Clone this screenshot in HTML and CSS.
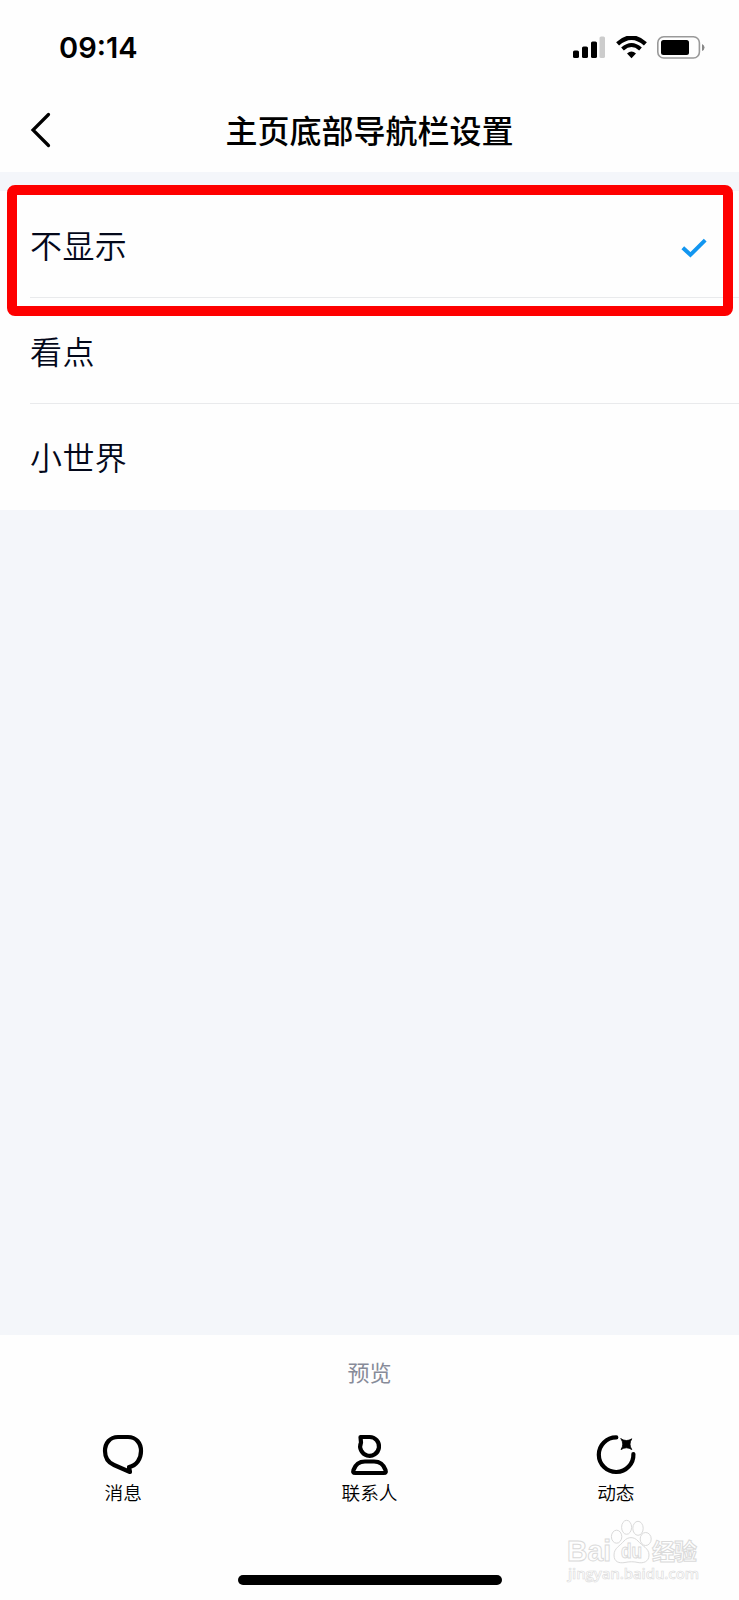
FILE: index.html
```
<!DOCTYPE html>
<html lang="zh-CN">
<head>
    <meta charset="UTF-8">
    <title>主页底部导航栏设置</title>
    <link rel="stylesheet" href="styles.css">
</head>
<body>
    <div id="screen">
        <div class="status-bar">
            <span class="time">09:14</span>
            <div class="status-icons">
                <svg class="signal" width="33" height="23" viewBox="0 0 33 23">
                    <rect x="0" y="14.5" width="6" height="7.5" rx="1.6"/>
                    <rect x="9" y="10.5" width="6" height="11.5" rx="1.6"/>
                    <rect x="18" y="5.5" width="6" height="16.5" rx="1.6"/>
                    <rect x="26.5" y="0.5" width="5.5" height="21.5" rx="1.6" fill="#ccc"/>
                </svg>
                <svg class="wifi" width="31" height="23" viewBox="0 0 31 23">
                    <path d="M1.6 7.8Q15.5 -4.6 29.4 7.8" fill="none" stroke="#000" stroke-width="4.4"/>
                    <path d="M6.5 13Q15.5 5 24.5 13" fill="none" stroke="#000" stroke-width="4"/>
                    <path d="M11 17.5Q15.5 13.6 20 17.5L15.5 22.3Z"/>
                </svg>
                <svg class="battery" width="48" height="23" viewBox="0 0 48 23">
                    <rect x="0.8" y="0.8" width="41.6" height="21.2" rx="6" fill="none" stroke="#999" stroke-width="1.6"/>
                    <rect x="4" y="4" width="28" height="15" rx="2.5"/>
                    <path d="M45 8Q47.5 9 47.5 11.5T45 15Z" fill="#888"/>
                </svg>
            </div>
        </div>

        <div class="header">
            <svg class="back" width="22" height="36" viewBox="0 0 22 36">
                <path d="M18.5 2.5L3 18L18.5 33.5" fill="none" stroke="#000" stroke-width="3.2" stroke-linecap="round"/>
            </svg>
            <h1>主页底部导航栏设置</h1>
        </div>

        <div class="content">
            <ul class="options">
                <li>
                    <span>不显示</span>
                    <svg width="26" height="20" viewBox="0 0 26 20">
                        <path d="M1.8 9.8L9.4 16.8L24.2 2.2" fill="none" stroke="#1296f0" stroke-width="4"/>
                    </svg>
                </li>
                <li><span>看点</span></li>
                <li><span>小世界</span></li>
            </ul>
            <div class="highlight"></div>
        </div>

        <div class="preview">
            <p>预览</p>
            <div class="nav">
                <div class="nav-item">
                    <svg width="42" height="42" viewBox="0 0 42 42">
                        <path d="M16 3H26C34 3 39 9 39 17C39 25 34.5 31.5 27 33L28 38L12 31C6 28.5 3 24 3 17C3 9 8 3 16 3Z"/>
                    </svg>
                    <span>消息</span>
                </div>
                <div class="nav-item">
                    <svg width="42" height="42" viewBox="0 0 42 42">
                        <path d="M12.5 3H21.5A9.4 9.4 0 1 1 13 8.6Z"/>
                        <path d="M7.3 39C5.2 39 4.9 38 5.5 36C7.7 29.5 13 27.5 17 27.5H26C30 27.5 35.3 29.5 37.5 36C38.1 38 37.8 39 35.7 39Z"/>
                    </svg>
                    <span>联系人</span>
                </div>
                <div class="nav-item">
                    <svg width="42" height="42" viewBox="0 0 42 42">
                        <path d="M21.3 3.4A17.3 17.3 0 1 0 38.4 20"/>
                        <path class="star" d="M26 4.8Q31.4 8.4 36.8 4.8Q33.2 10.2 36.8 15.6Q31.4 12 26 15.6Q29.6 10.2 26 4.8Z"/>
                    </svg>
                    <span>动态</span>
                </div>
            </div>
            <div class="home-bar"></div>
        </div>

        <svg class="watermark" width="140" height="70" viewBox="0 0 140 70">
            <text class="latin" x="2" y="43" textLength="44" lengthAdjust="spacingAndGlyphs">Bai</text>
            <path d="M59 23C63 18.5 69 18.5 73 23C77 28 84 30 84 37C84 44 78 45.5 73 44.5C69 43.5 64 43.5 60 44.5C54 45.5 49 44 49 37C49 30 55 28 59 23Z"/>
            <ellipse cx="51.6" cy="18.7" rx="5.2" ry="6.5"/>
            <ellipse cx="61.6" cy="9.3" rx="5" ry="7"/>
            <ellipse cx="73" cy="10.3" rx="5.2" ry="7"/>
            <ellipse cx="80.7" cy="21" rx="5.5" ry="6.5"/>
            <text class="du" x="56" y="40" textLength="21" lengthAdjust="spacingAndGlyphs">du</text>
            <text class="cjk" x="87" y="41.5" textLength="45">经验</text>
            <text class="url" x="3" y="60.5" textLength="131">jingyan.baidu.com</text>
        </svg>
    </div>
</body>
</html>
```
FILE: styles.css
```
/* General body styling */
body {
    margin: 0;
    font-family: "Noto Sans CJK SC", sans-serif;
    background-color: #fefefe;
    color: #000;
}

#screen {
    position: relative;
    display: flex;
    flex-direction: column;
    height: 1600px;
    overflow: hidden;
}

/* Status bar */
.status-bar {
    display: flex;
    justify-content: space-between;
    align-items: center;
    height: 94px;
    padding: 0 34px 0 59px;
}

.time {
    font-family: Inter, sans-serif;
    font-size: 29px;
    font-weight: 600;
}

.status-icons {
    display: flex;
    gap: 10px;
}

/* Title row */
.header {
    display: flex;
    align-items: center;
    height: 78px;
    padding: 0 30px;
}

.back {
    margin-top: -6px;
}

h1 {
    flex: 1;
    margin: -9px 22px 0 0;
    font-size: 32px;
    font-weight: 500;
    line-height: 40px;
    text-align: center;
}

/* Option list */
.content {
    position: relative;
    height: 1143.5px;
    padding-top: 19px;
    background-color: #f4f6fa;
}

.options {
    margin: 0;
    padding: 0;
    list-style: none;
    background-color: #fefefe;
}

.options li {
    display: flex;
    justify-content: space-between;
    align-items: center;
    box-sizing: border-box;
    height: 106px;
    margin-left: 30px;
    padding: 0 32px 2px 0;
    border-bottom: 1px solid #e9eaec;
    font-size: 32px;
    font-weight: 350;
    line-height: 40px;
    letter-spacing: 0.4px;
    color: #03081a;
}

.options li:first-child {
    height: 107px;
    padding-bottom: 1px;
}

.options li:last-child {
    border-bottom: none;
}

.options svg {
    margin-top: 8px;
}

/* Red frame over the first option */
.highlight {
    position: absolute;
    top: 13px;
    left: 7px;
    width: 706px;
    height: 111px;
    border: 10px solid #fe0000;
    border-radius: 8px;
}

/* Bottom preview */
.preview {
    display: flex;
    flex-direction: column;
    align-items: center;
    flex: 1;
    padding-top: 20.5px;
}

.preview p {
    margin: 0;
    font-size: 22px;
    line-height: 32px;
    color: #878b99;
}

.nav {
    display: flex;
    width: 100%;
    margin-top: 47px;
}

.nav-item {
    display: flex;
    flex: 1;
    flex-direction: column;
    align-items: center;
    font-size: 18.7px;
    font-weight: 350;
    line-height: 28px;
}

.nav-item span {
    margin-top: 2px;
}

.nav-item path {
    fill: none;
    stroke: #000;
    stroke-width: 4.2;
    stroke-linecap: round;
    stroke-linejoin: round;
}

.nav-item .star {
    fill: #000;
    stroke-width: 0.8;
}

.home-bar {
    width: 264px;
    height: 10px;
    margin-top: 69px;
    border-radius: 5px;
    background-color: #000;
}

/* Watermark */
.watermark {
    position: absolute;
    right: 34px;
    bottom: 12px;
    fill: #fefefe;
    stroke: #dadada;
    stroke-width: 1;
    font-family: "Liberation Sans", sans-serif;
    font-weight: 700;
}

.latin {
    font-size: 30px;
}

.du {
    font-size: 20px;
}

.cjk {
    font-family: "Noto Sans CJK SC", sans-serif;
    font-size: 23px;
}

.url {
    font-family: "Open Sans", sans-serif;
    font-size: 15px;
    font-weight: 600;
    stroke-width: 0.6;
}
```
